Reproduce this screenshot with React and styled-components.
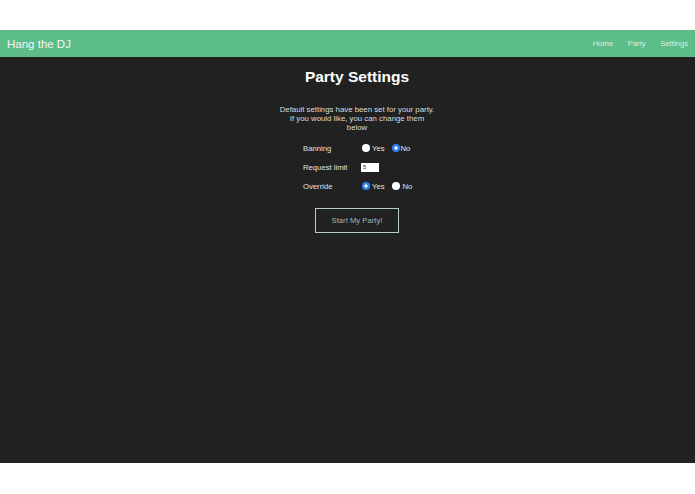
import React, { useState } from 'react';
import styled, { createGlobalStyle } from 'styled-components';

const GlobalStyle = createGlobalStyle`
  body {
    margin: 0;
    background: #ffffff;
    font-family: "Liberation Sans", Arial, sans-serif;
  }
`;

const Page = styled.div`
  padding: 30px 0 31px;
`;

const Frame = styled.div`
  height: 433px;
  background: #212121;
  display: flex;
  flex-direction: column;
`;

const NavBar = styled.nav`
  height: 27px;
  flex-shrink: 0;
  background: #5dbd89;
  display: flex;
  align-items: center;
  justify-content: space-between;
  padding: 0 7px;
`;

const Brand = styled.div`
  font-size: 11.5px;
  color: #f4f4f4;
`;

const NavLinks = styled.div`
  display: flex;
  gap: 14.5px;
`;

const NavLink = styled.span`
  font-size: 7.7px;
  color: rgba(255, 255, 255, 0.78);
`;

const Main = styled.main`
  display: flex;
  flex-direction: column;
  align-items: center;
  padding-left: 19px;
`;

const Title = styled.h1`
  margin: 11px 0 0;
  font-size: 15.5px;
  line-height: 18px;
  font-weight: bold;
  color: #ffffff;
`;

const Intro = styled.p`
  margin: 18.5px 0 0;
  width: 156px;
  font-size: 7.8px;
  line-height: 9px;
  text-align: center;
  color: #dcdcdc;
`;

const Form = styled.div`
  margin-top: 7px;
  width: 108px;
  display: grid;
  grid-template-columns: 59px auto;
  grid-auto-rows: 19px;
  align-items: center;
  font-size: 7.7px;
  color: #e2e2e2;
  white-space: nowrap;
`;

const Options = styled.div`
  display: flex;
  align-items: center;
`;

const Option = styled.label`
  display: flex;
  align-items: center;
  gap: ${p => p.$gap}px;
  margin-left: ${p => (p.$first ? 0 : 7)}px;
`;

const Radio = styled.input.attrs({ type: 'radio' })`
  appearance: none;
  margin: 0;
  width: 8px;
  height: 8px;
  border-radius: 50%;
  background: #ffffff;
  &:checked {
    background: radial-gradient(circle, #ffffff 0 1.4px, #2f80f0 1.8px);
  }
`;

const LimitInput = styled.input`
  box-sizing: border-box;
  margin-left: -1px;
  width: 18px;
  height: 9px;
  padding: 0 2px;
  border: none;
  background: #ffffff;
  font-family: inherit;
  font-size: 5.5px;
  color: #222;
`;

const StartButton = styled.button`
  margin-top: 12.5px;
  width: 84px;
  height: 25px;
  background: transparent;
  border: 1.5px solid #b9cec3;
  color: #a6b4ad;
  font-family: inherit;
  font-size: 7.7px;
`;

const RadioRow = ({ name, value, onChange }) => (
  <Options>
    <Option $first $gap={2}>
      <Radio name={name} checked={value === 'yes'} onChange={() => onChange('yes')} />
      Yes
    </Option>
    <Option $gap={value === 'no' ? 1 : 3}>
      <Radio name={name} checked={value === 'no'} onChange={() => onChange('no')} />
      No
    </Option>
  </Options>
);

const App = () => {
  const [banning, setBanning] = useState('no');
  const [override, setOverride] = useState('yes');
  const [limit, setLimit] = useState('5');

  return (
    <Page>
      <GlobalStyle />
      <Frame>
        <NavBar>
          <Brand>Hang the DJ</Brand>
          <NavLinks>
            <NavLink>Home</NavLink>
            <NavLink>Party</NavLink>
            <NavLink>Settings</NavLink>
          </NavLinks>
        </NavBar>
        <Main>
          <Title>Party Settings</Title>
          <Intro>
            Default settings have been set for your party. If you would like, you can change them below
          </Intro>
          <Form>
            <span>Banning</span>
            <RadioRow name="banning" value={banning} onChange={setBanning} />
            <span>Request limit</span>
            <Options>
              <LimitInput value={limit} onChange={e => setLimit(e.target.value)} />
            </Options>
            <span>Override</span>
            <RadioRow name="override" value={override} onChange={setOverride} />
          </Form>
          <StartButton>Start My Party!</StartButton>
        </Main>
      </Frame>
    </Page>
  );
};

export default App;
